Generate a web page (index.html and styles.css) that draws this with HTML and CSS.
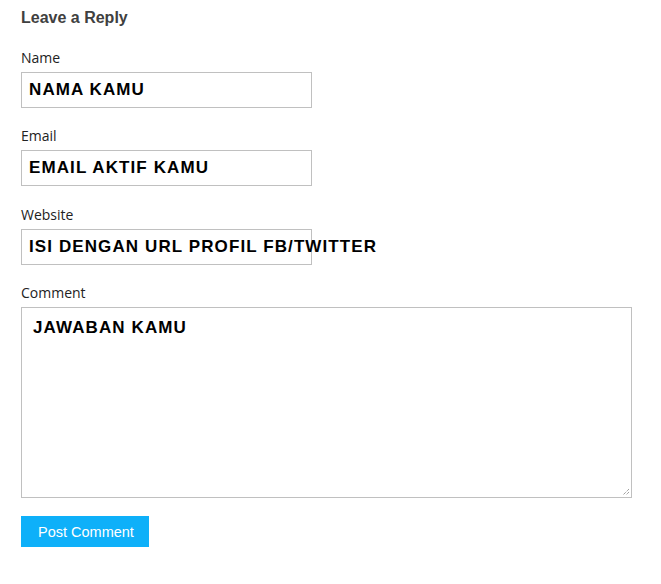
FILE: index.html
```html
<!DOCTYPE html>
<html>
<head>
<meta charset="utf-8">
<link rel="stylesheet" href="styles.css">
</head>
<body>
<div class="reply">
  <h3 class="title">Leave a Reply</h3>
  <div class="field">
    <label class="label">Name</label>
    <div class="input">NAMA KAMU</div>
  </div>
  <div class="field">
    <label class="label">Email</label>
    <div class="input">EMAIL AKTIF KAMU</div>
  </div>
  <div class="field">
    <label class="label">Website</label>
    <div class="input">ISI DENGAN URL PROFIL FB/TWITTER</div>
  </div>
  <div class="field">
    <label class="label">Comment</label>
    <div class="textarea">JAWABAN KAMU
      <svg class="grip" width="8" height="8" viewBox="0 0 8 8"><path d="M7 1L1 7M7 4L4 7" stroke="#777" stroke-width="1" stroke-dasharray="1 1"/></svg>
    </div>
  </div>
  <button class="submit">Post Comment</button>
</div>
</body>
</html>
```
FILE: styles.css
```css
body {
  margin: 8px;
  background: #fff;
}
.reply {
  padding-left: 13px;
  display: flex;
  flex-direction: column;
  align-items: flex-start;
}
.title {
  margin: 0 0 21px 0;
  padding-top: 1px;
  font-family: "Liberation Sans", Arial, sans-serif;
  font-size: 16px;
  line-height: 18px;
  font-weight: bold;
  color: #404040;
}
.field {
  display: flex;
  flex-direction: column;
  align-items: flex-start;
  margin-bottom: 18.33px;
}
.label {
  font-family: "Open Sans", sans-serif;
  font-size: 14px;
  line-height: 20px;
  color: #222;
  margin-bottom: 4px;
}
.input {
  box-sizing: border-box;
  width: 291px;
  height: 36px;
  border: 1px solid #c0c0c0;
  padding: 0 0 0 7px;
  font-family: "Liberation Sans", Arial, sans-serif;
  font-weight: bold;
  font-size: 17px;
  letter-spacing: 1.1px;
  color: #000;
  white-space: nowrap;
  overflow: visible;
  display: flex;
  align-items: center;
}
.textarea {
  position: relative;
  box-sizing: border-box;
  width: 611px;
  height: 191px;
  border: 1px solid #c0c0c0;
  padding: 10px 11px;
  font-family: "Liberation Sans", Arial, sans-serif;
  font-weight: bold;
  font-size: 17px;
  letter-spacing: 1.1px;
  line-height: 19px;
  color: #000;
}
.grip {
  position: absolute;
  right: 1px;
  bottom: 1px;
}
.submit {
  border: none;
  margin: 0;
  background: #0eb0f9;
  color: #fff;
  font-family: "Liberation Sans", Arial, sans-serif;
  font-size: 14.5px;
  height: 31px;
  padding: 0 15px 0 17px;
  cursor: pointer;
}
```
